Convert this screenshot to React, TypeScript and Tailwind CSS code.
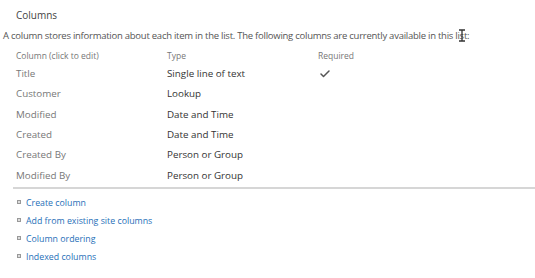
import { Check } from "lucide-react";

const ROWS = [
  { name: "Title", type: "Single line of text", required: true },
  { name: "Customer", type: "Lookup" },
  { name: "Modified", type: "Date and Time" },
  { name: "Created", type: "Date and Time" },
  { name: "Created By", type: "Person or Group" },
  { name: "Modified By", type: "Person or Group" },
];

const LINKS = ["Create column", "Add from existing site columns", "Column ordering", "Indexed columns"];

export default function App() {
  return (
    <div className="relative h-[278px] w-[535px] overflow-hidden bg-white font-['Open_Sans',sans-serif]">
      <div className="pt-[8px] pl-[16px] text-[10px] text-[#444]">Columns</div>
      <p className="mt-[6px] pl-[3px] text-[9.5px] tracking-[-0.25px] whitespace-nowrap text-[#555]">
        A column stores information about each item in the list. The following columns are currently available in this list:
      </p>
      <div className="mt-[7px] grid grid-cols-[151px_151px_1fr] pl-[16px] text-[8.5px] text-[#777]">
        <span>Column (click to edit)</span>
        <span>Type</span>
        <span>Required</span>
      </div>
      <div className="mt-[1px] pl-[16px]">
        {ROWS.map((r) => (
          <div key={r.name} className="grid h-[20.4px] grid-cols-[151px_151px_1fr] items-center text-[9.8px]">
            <span className="text-[#777]">{r.name}</span>
            <span className="text-[#333]">{r.type}</span>
            <span className="pl-[1px]">
              {r.required && <Check className="h-[12px] w-[12px] text-[#555]" strokeWidth={3} />}
            </span>
          </div>
        ))}
      </div>
      <div className="mt-[1px] ml-[13px] h-[2px] bg-[#d6d6d6]" />
      <ul className="mt-[5px] flex flex-col pl-[17px]">
        {LINKS.map((l) => (
          <li key={l} className="flex h-[18px] items-center gap-[5px] text-[8.8px] text-[#1f6fb8]">
            <span className="mb-[3px] h-[4px] w-[4px] border border-[#999] bg-[#ddd]" />
            {l}
          </li>
        ))}
      </ul>
      <svg className="absolute left-[458px] top-[29px]" width="8" height="13" viewBox="0 0 8 13">
        <path d="M1 1h6M4 1v11M1 12h6" stroke="#333" strokeWidth="1.3" fill="none" />
      </svg>
    </div>
  );
}
